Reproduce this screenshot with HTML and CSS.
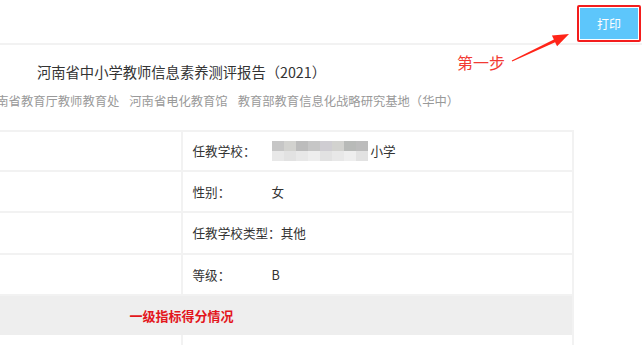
FILE: index.html
```html
<!DOCTYPE html>
<html lang="zh-CN">
<head>
  <meta charset="UTF-8" />
  <title>测评报告</title>
  <link rel="stylesheet" href="styles.css">
</head>
<body>
  <div class="topbar">
    <div class="print-box">
      <button class="print-btn">打印</button>
    </div>
  </div>

  <!-- 标注：第一步 -->
  <div class="step-note">第一步</div>
  <svg class="step-arrow" width="642" height="80" viewBox="0 0 642 80">
    <polygon fill="#ff2418" points="511.8,60.5 512.2,61.5 555.1,42.3 557.1,46.3 569,34 551.9,35.5 553.9,39.5" />
  </svg>

  <div class="report">
    <h2 class="report-title">河南省中小学教师信息素养测评报告（2021）</h2>
    <p class="report-sub">
      <span>河南省教育厅教师教育处</span>
      <span>河南省电化教育馆</span>
      <span>教育部教育信息化战略研究基地（华中）</span>
    </p>

    <div class="info-table">
      <div class="row">
        <div class="cell"></div>
        <div class="cell">
          <span class="label">任教学校：</span>
          <span class="mosaic">
            <i class="m1"></i><i class="m2"></i><i class="m3"></i><i class="m1"></i><i class="m4"></i><i class="m2"></i><i class="m5"></i><i class="m3"></i>
            <i class="n1"></i><i class="n2"></i><i class="n1"></i><i class="n3"></i><i class="n2"></i><i class="n1"></i><i class="n3"></i><i class="n2"></i>
          </span>小学
        </div>
      </div>
      <div class="row">
        <div class="cell"></div>
        <div class="cell"><span class="label">性别：</span>女</div>
      </div>
      <div class="row">
        <div class="cell"></div>
        <div class="cell"><span class="label">任教学校类型：</span>其他</div>
      </div>
      <div class="row">
        <div class="cell"></div>
        <div class="cell"><span class="label">等级：</span>B</div>
      </div>
      <div class="band">一级指标得分情况</div>
      <div class="row">
        <div class="cell"></div>
        <div class="cell"></div>
      </div>
    </div>
  </div>
</body>
</html>
```

FILE: styles.css
```css
body {
  margin: 0;
  font-family: "Noto Sans CJK SC", "Noto Sans", sans-serif;
  color: #333;
  background-color: #fff;
  overflow: hidden;
  position: relative;
}
.topbar {
  height: 45px;
  border-bottom: 2px solid #f2f2f2;
  display: flex;
  justify-content: flex-end;
  align-items: flex-start;
  padding: 5px 1px 0 0;
  box-sizing: border-box;
}
.print-box {
  border: 2px solid #f31d1d;
  padding: 1px;
  border-radius: 2px;
}
.print-btn {
  display: block;
  width: 58px;
  height: 31px;
  border: none;
  background-color: #5dc6fb;
  color: #fff;
  font-family: "Noto Sans CJK SC", sans-serif;
  font-size: 12px;
  cursor: pointer;
}
.step-note {
  position: absolute;
  left: 457px;
  top: 51px;
  font-size: 16px;
  line-height: 22px;
  color: #f23a33;
}
.step-arrow {
  position: absolute;
  left: 0;
  top: 0;
}
.report {
  width: 785px;
  margin-left: -211px;
}
.report-title {
  margin: 17px 0 0;
  font-size: 14.3px;
  font-weight: normal;
  line-height: 20px;
  text-align: center;
  color: #333;
}
.report-sub {
  margin: 10px 0 0;
  padding-left: 195px;
  font-size: 12.3px;
  line-height: 18px;
  color: #999;
  display: flex;
  gap: 10px;
  white-space: nowrap;
}
.info-table {
  margin-top: 20px;
  border: 2px solid #f2f2f2;
  border-bottom: none;
}
.row {
  display: flex;
  height: 41.5px;
  border-bottom: 2px solid #f2f2f2;
  box-sizing: border-box;
}
.row:first-child {
  height: 39.5px;
}
.cell {
  flex: 1;
  display: flex;
  align-items: center;
  padding-left: 10px;
  font-size: 12.6px;
}
.cell:first-child {
  border-right: 2px solid #f2f2f2;
}
.label {
  display: inline-block;
  min-width: 79px;
}
.band {
  height: 39px;
  background-color: #eeeeee;
  color: #e3161c;
  font-size: 13px;
  font-weight: bold;
  display: flex;
  align-items: center;
  justify-content: center;
}
.mosaic {
  display: inline-grid;
  grid-template-columns: repeat(8, 12px);
  grid-template-rows: 10px 10px;
  width: 96px;
  margin-right: 3px;
}
.mosaic i { display: block; }
.m1 { background: #c6c6c6; }
.m2 { background: #d2d2cf; }
.m3 { background: #bcbcbc; }
.m4 { background: #cfcdd2; }
.m5 { background: #b8bab8; }
.n1 { background: #e8e8e8; }
.n2 { background: #e2e2e2; }
.n3 { background: #eeeeee; }
```
